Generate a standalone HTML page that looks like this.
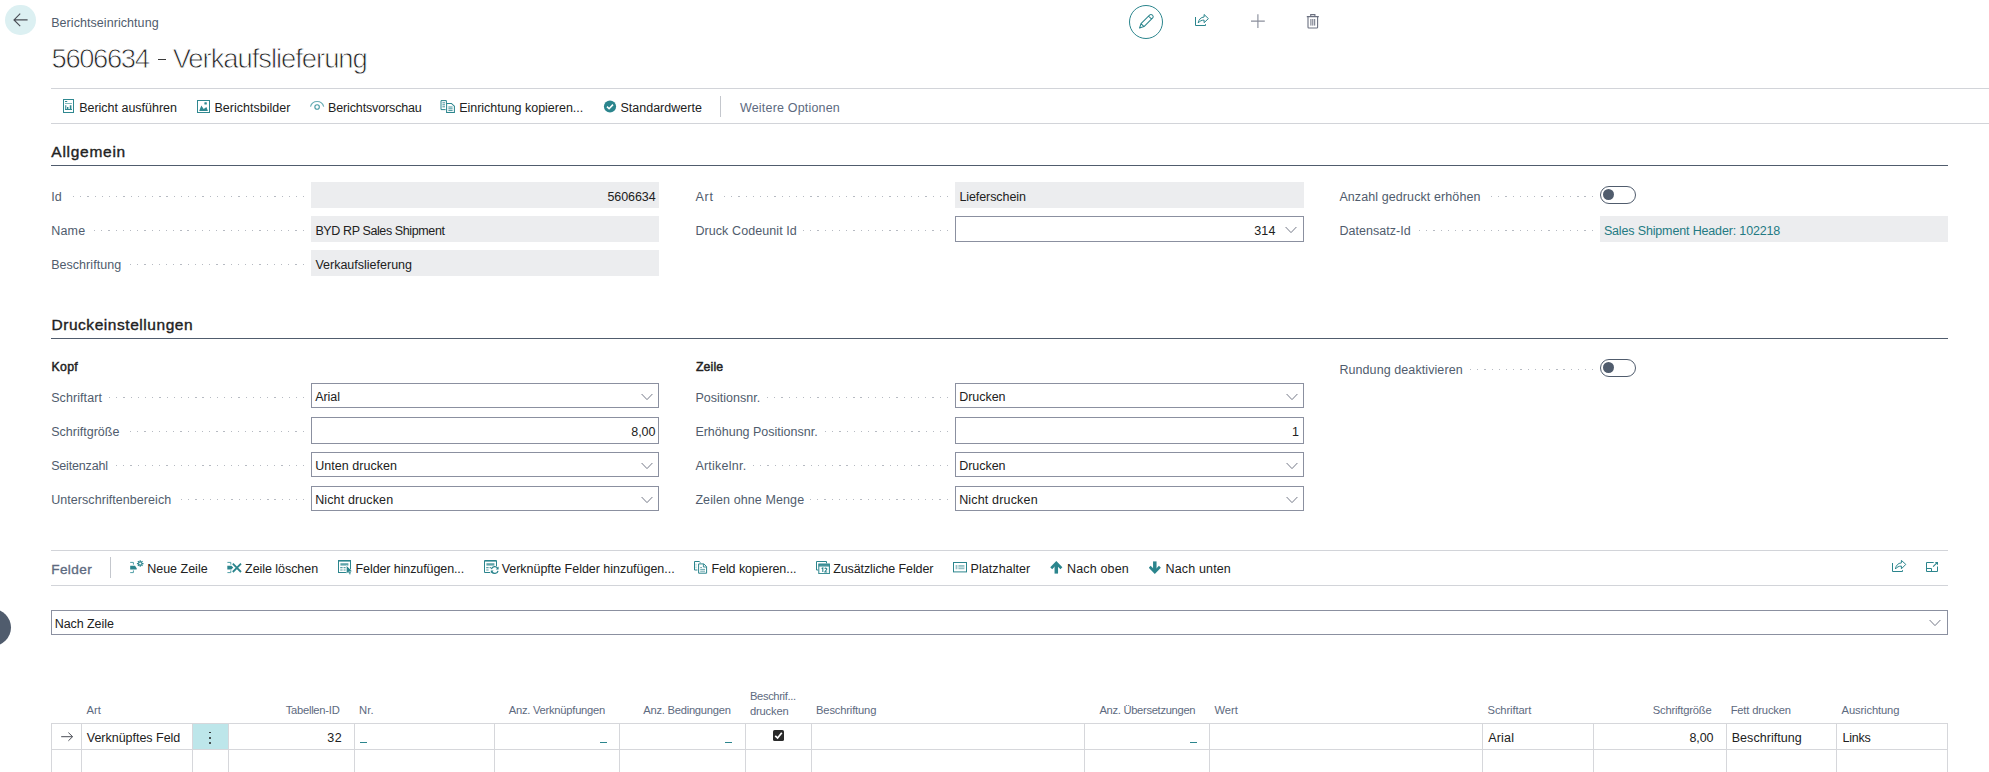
<!DOCTYPE html>
<html lang="de"><head><meta charset="utf-8"><title>Berichtseinrichtung</title>
<style>
html,body{margin:0;padding:0;background:#fff;}
body{width:1989px;height:772px;position:relative;overflow:hidden;font-family:"Liberation Sans", sans-serif;}
.a{position:absolute;}
.t{position:absolute;white-space:pre;line-height:20px;height:20px;}
</style></head><body>
<div class="a" style="left:5px;top:5px;width:31px;height:30.4px;background:#dcf0f2;border-radius:16px;"></div>
<svg class="a" style="left:12px;top:12px" width="17" height="16" viewBox="0 0 17 16" fill="none"><path d="M15.6 7.9 H2.2 M8.2 1.6 L2 7.9 L8.2 14.2" stroke="#4a4d55" stroke-width="1.15" fill="none"/></svg>
<div class="a" style="left:158.3px;top:58.9px;width:7.3px;height:1.4px;background:#3a3a3a;"></div>
<div class="a" style="left:1129px;top:5px;width:34px;height:34px;border:1.2px solid #2b858d;border-radius:50%;box-sizing:border-box"></div>
<svg class="a" style="left:1138px;top:13px" width="17" height="17" viewBox="0 0 17 17" fill="none"><path d="M1.6 15 L3 10.6 L11.8 1.9 a1.6 1.6 0 0 1 2.3 0 l0.6 0.6 a1.6 1.6 0 0 1 0 2.3 L6 13.6 Z M3 10.6 L6 13.6 M10.6 3.1 L13.5 6" stroke="#2b858d" stroke-width="1.05" fill="none" stroke-linejoin="round"/></svg>
<svg class="a" style="left:1194px;top:14px" width="16" height="13" viewBox="0 0 16 13" fill="none"><path d="M1.5 3 V11.5 H11.5 V10.2" stroke="#2b858d" stroke-width="1" fill="none"/><path d="M4.2 9 C4.8 5.4 6.8 3.2 10.1 3 V0.5 L14.4 4.6 L10.1 8.7 V6.1 C7.6 6.1 5.8 7 4.2 9 Z" stroke="#2b858d" stroke-width="1" fill="none" stroke-linejoin="round"/></svg>
<svg class="a" style="left:1250px;top:14px" width="15" height="15" viewBox="0 0 15 15" fill="none"><path d="M7.9 0.2 V14 M1 7.1 H14.8" stroke="#8b8f9c" stroke-width="1.15"/></svg>
<svg class="a" style="left:1306px;top:13px" width="14" height="16" viewBox="0 0 14 16" fill="none"><path d="M0.8 3.6 H12.8 M4.7 3.4 V1.6 H8.9 V3.4 M2 3.8 V14.2 a0.8 0.8 0 0 0 0.8 0.8 H10.8 a0.8 0.8 0 0 0 0.8 -0.8 V3.8" stroke="#6b7080" stroke-width="1.1" fill="none"/><path d="M4.9 6 V12.6 M6.8 6 V12.6 M8.7 6 V12.6" stroke="#6b7080" stroke-width="1"/></svg>
<div class="a" style="left:51px;top:88px;width:1938px;height:1px;background:#d2d4d9;"></div>
<div class="a" style="left:51px;top:123px;width:1938px;height:1px;background:#d2d4d9;"></div>
<svg class="a" style="left:63px;top:99px" width="11" height="14" viewBox="0 0 11 14" fill="none"><rect x="0.5" y="0.5" width="10" height="13" stroke="#2f8890" stroke-width="1"/><path d="M2 2.5 H4.2" stroke="#2f8890" stroke-width="1"/><path d="M2 4.5 H9" stroke="#2f8890" stroke-width="1" opacity="0.6"/><path d="M2.2 10.5 V6.3 H3.3 V10.5 Z M4 10.5 V8 H5.4 V10.5 Z M6.8 10.5 V6.3 H8.4 V10.5 Z" fill="#2f8890"/><path d="M2 10.5 H9" stroke="#2f8890" stroke-width="1"/></svg>
<svg class="a" style="left:197px;top:100px" width="13" height="13" viewBox="0 0 13 13" fill="none"><rect x="0.5" y="0.5" width="12" height="12" stroke="#2f8890" stroke-width="1"/><path d="M2.2 10.9 L4.3 5.6 L6.7 8.9 L9.4 7.1 L10.9 10.9 Z" fill="#2f8890"/><rect x="7.4" y="2.3" width="2.4" height="2.1" rx="0.5" fill="#2f8890"/></svg>
<svg class="a" style="left:309px;top:100px" width="16" height="12" viewBox="0 0 16 12" fill="none"><path d="M1.5 6.6 C2.4 3.2 4.8 1.5 8.1 1.5 C11.4 1.5 13.8 3.2 14.7 6.6" stroke="#68adb4" stroke-width="1.15" fill="none"/><circle cx="8.1" cy="7" r="2.25" stroke="#4a9ca4" stroke-width="1.15" fill="none"/></svg>
<svg class="a" style="left:440px;top:100px" width="16" height="13" viewBox="0 0 16 13" fill="none"><path d="M1 0.6 H6.4 V3.6 M1 0.6 V9.6 H5.6" stroke="#2b858d" stroke-width="1" fill="none"/><path d="M2.4 2.8 H5 M2.4 4.8 H5 M2.4 6.8 H5" stroke="#2b858d" stroke-width="0.9"/><path d="M6.6 3.4 H11.4 L14.4 6.2 V12.4 H6.6 Z" stroke="#2b858d" stroke-width="1.05" fill="none"/><path d="M8.4 7 H12.6 M8.4 8.8 H12.6 M8.4 10.6 H12.6" stroke="#2b858d" stroke-width="0.9"/></svg>
<svg class="a" style="left:603px;top:100px" width="14" height="13" viewBox="0 0 14 13" fill="none"><circle cx="7" cy="6.5" r="6.1" fill="#2b858d"/><path d="M4 6.6 L6.1 8.7 L10 4.6" stroke="#fff" stroke-width="1.6" fill="none"/></svg>
<div class="a" style="left:720px;top:96px;width:1px;height:21px;background:#c4c7cd;"></div>
<div class="a" style="left:51px;top:165px;width:1897px;height:1px;background:#505c6d;"></div>
<div class="a" style="left:72.72px;top:195.80px;width:231.28px;height:1.5px;background:repeating-linear-gradient(to right,#b6bac2 0,#b6bac2 1.25px,transparent 1.25px,transparent 7.19px)"></div>
<div class="a" style="left:311px;top:182px;width:348px;height:26px;background:#ecedef;"></div>
<div class="a" style="left:94.29px;top:229.80px;width:209.71px;height:1.5px;background:repeating-linear-gradient(to right,#b6bac2 0,#b6bac2 1.25px,transparent 1.25px,transparent 7.19px)"></div>
<div class="a" style="left:311px;top:216px;width:348px;height:26px;background:#ecedef;"></div>
<div class="a" style="left:130.24px;top:263.80px;width:173.76px;height:1.5px;background:repeating-linear-gradient(to right,#b6bac2 0,#b6bac2 1.25px,transparent 1.25px,transparent 7.19px)"></div>
<div class="a" style="left:311px;top:250px;width:348px;height:26px;background:#ecedef;"></div>
<div class="a" style="left:723.91px;top:195.80px;width:224.09px;height:1.5px;background:repeating-linear-gradient(to right,#b6bac2 0,#b6bac2 1.25px,transparent 1.25px,transparent 7.19px)"></div>
<div class="a" style="left:955px;top:182px;width:349px;height:26px;background:#ecedef;"></div>
<div class="a" style="left:803.00px;top:229.80px;width:145.00px;height:1.5px;background:repeating-linear-gradient(to right,#b6bac2 0,#b6bac2 1.25px,transparent 1.25px,transparent 7.19px)"></div>
<div class="a" style="left:955px;top:216px;width:349px;height:26px;background:#fff;border:1px solid #8b90a0;box-sizing:border-box;"></div>
<svg class="a" style="left:1285.3px;top:226px" width="12" height="8" viewBox="0 0 12 8" fill="none"><path d="M0.6 1 L6 6.6 L11.4 1" stroke="#747988" stroke-width="1" fill="none"/></svg>
<div class="a" style="left:1491.14px;top:195.80px;width:101.86px;height:1.5px;background:repeating-linear-gradient(to right,#b6bac2 0,#b6bac2 1.25px,transparent 1.25px,transparent 7.19px)"></div>
<div class="a" style="left:1600px;top:186px;width:36px;height:18px;background:#fff;border:1px solid #505c6d;box-sizing:border-box;border-radius:9px;"></div>
<div class="a" style="left:1602.6px;top:189.0px;width:11px;height:11px;background:#505c6d;border-radius:6px;"></div>
<div class="a" style="left:1419.24px;top:229.80px;width:173.76px;height:1.5px;background:repeating-linear-gradient(to right,#b6bac2 0,#b6bac2 1.25px,transparent 1.25px,transparent 7.19px)"></div>
<div class="a" style="left:1600px;top:216px;width:348px;height:26px;background:#ecedef;"></div>
<div class="a" style="left:51px;top:338px;width:1897px;height:1px;background:#505c6d;"></div>
<div class="a" style="left:108.67px;top:396.80px;width:195.33px;height:1.5px;background:repeating-linear-gradient(to right,#b6bac2 0,#b6bac2 1.25px,transparent 1.25px,transparent 7.19px)"></div>
<div class="a" style="left:311px;top:383px;width:348px;height:25px;background:#fff;border:1px solid #8b90a0;box-sizing:border-box;"></div>
<svg class="a" style="left:640.5px;top:392.5px" width="12" height="8" viewBox="0 0 12 8" fill="none"><path d="M0.6 1 L6 6.6 L11.4 1" stroke="#747988" stroke-width="1" fill="none"/></svg>
<div class="a" style="left:130.24px;top:430.80px;width:173.76px;height:1.5px;background:repeating-linear-gradient(to right,#b6bac2 0,#b6bac2 1.25px,transparent 1.25px,transparent 7.19px)"></div>
<div class="a" style="left:311px;top:417px;width:348px;height:27px;background:#fff;border:1px solid #8b90a0;box-sizing:border-box;"></div>
<div class="a" style="left:115.86px;top:464.80px;width:188.14px;height:1.5px;background:repeating-linear-gradient(to right,#b6bac2 0,#b6bac2 1.25px,transparent 1.25px,transparent 7.19px)"></div>
<div class="a" style="left:311px;top:452px;width:348px;height:25px;background:#fff;border:1px solid #8b90a0;box-sizing:border-box;"></div>
<svg class="a" style="left:640.5px;top:461.5px" width="12" height="8" viewBox="0 0 12 8" fill="none"><path d="M0.6 1 L6 6.6 L11.4 1" stroke="#747988" stroke-width="1" fill="none"/></svg>
<div class="a" style="left:180.57px;top:498.80px;width:123.43px;height:1.5px;background:repeating-linear-gradient(to right,#b6bac2 0,#b6bac2 1.25px,transparent 1.25px,transparent 7.19px)"></div>
<div class="a" style="left:311px;top:486px;width:348px;height:25px;background:#fff;border:1px solid #8b90a0;box-sizing:border-box;"></div>
<svg class="a" style="left:640.5px;top:495.5px" width="12" height="8" viewBox="0 0 12 8" fill="none"><path d="M0.6 1 L6 6.6 L11.4 1" stroke="#747988" stroke-width="1" fill="none"/></svg>
<div class="a" style="left:767.05px;top:396.80px;width:180.95px;height:1.5px;background:repeating-linear-gradient(to right,#b6bac2 0,#b6bac2 1.25px,transparent 1.25px,transparent 7.19px)"></div>
<div class="a" style="left:955px;top:383px;width:349px;height:25px;background:#fff;border:1px solid #8b90a0;box-sizing:border-box;"></div>
<svg class="a" style="left:1285.5px;top:392.5px" width="12" height="8" viewBox="0 0 12 8" fill="none"><path d="M0.6 1 L6 6.6 L11.4 1" stroke="#747988" stroke-width="1" fill="none"/></svg>
<div class="a" style="left:824.57px;top:430.80px;width:123.43px;height:1.5px;background:repeating-linear-gradient(to right,#b6bac2 0,#b6bac2 1.25px,transparent 1.25px,transparent 7.19px)"></div>
<div class="a" style="left:955px;top:417px;width:349px;height:27px;background:#fff;border:1px solid #8b90a0;box-sizing:border-box;"></div>
<div class="a" style="left:752.67px;top:464.80px;width:195.33px;height:1.5px;background:repeating-linear-gradient(to right,#b6bac2 0,#b6bac2 1.25px,transparent 1.25px,transparent 7.19px)"></div>
<div class="a" style="left:955px;top:452px;width:349px;height:25px;background:#fff;border:1px solid #8b90a0;box-sizing:border-box;"></div>
<svg class="a" style="left:1285.5px;top:461.5px" width="12" height="8" viewBox="0 0 12 8" fill="none"><path d="M0.6 1 L6 6.6 L11.4 1" stroke="#747988" stroke-width="1" fill="none"/></svg>
<div class="a" style="left:810.19px;top:498.80px;width:137.81px;height:1.5px;background:repeating-linear-gradient(to right,#b6bac2 0,#b6bac2 1.25px,transparent 1.25px,transparent 7.19px)"></div>
<div class="a" style="left:955px;top:486px;width:349px;height:25px;background:#fff;border:1px solid #8b90a0;box-sizing:border-box;"></div>
<svg class="a" style="left:1285.5px;top:495.5px" width="12" height="8" viewBox="0 0 12 8" fill="none"><path d="M0.6 1 L6 6.6 L11.4 1" stroke="#747988" stroke-width="1" fill="none"/></svg>
<div class="a" style="left:1469.57px;top:368.80px;width:123.43px;height:1.5px;background:repeating-linear-gradient(to right,#b6bac2 0,#b6bac2 1.25px,transparent 1.25px,transparent 7.19px)"></div>
<div class="a" style="left:1600px;top:359px;width:36px;height:18px;background:#fff;border:1px solid #505c6d;box-sizing:border-box;border-radius:9px;"></div>
<div class="a" style="left:1602.6px;top:362.0px;width:11px;height:11px;background:#505c6d;border-radius:6px;"></div>
<div class="a" style="left:51px;top:550px;width:1897px;height:1px;background:#d2d4d9;"></div>
<div class="a" style="left:51px;top:585px;width:1897px;height:1px;background:#d2d4d9;"></div>
<div class="a" style="left:110px;top:557px;width:1px;height:21px;background:#c4c7cd;"></div>
<svg class="a" style="left:129px;top:560px" width="15" height="14" viewBox="0 0 15 14" fill="none"><path d="M1.2 2.4 H4.4 V4.6 M1.2 12.6 H4.4 V10.4" stroke="#4f9ea6" stroke-width="1" fill="none"/><path d="M1.2 5.8 H6 L7.8 8.4 L7.6 9.4 H1.2 Z" fill="#2b858d"/><path d="M11.2 0.2 V6.8 M7.9 3.5 H14.5 M8.9 1.2 L13.5 5.8 M13.5 1.2 L8.9 5.8" stroke="#2b858d" stroke-width="1.25"/><circle cx="11.2" cy="3.5" r="1.5" fill="#fff" stroke="#2b858d" stroke-width="0.9"/></svg>
<svg class="a" style="left:227px;top:560px" width="15" height="14" viewBox="0 0 15 14" fill="none"><path d="M0.4 2.4 H3.8 V4.6 M0.4 12.6 H3.8 V10.4" stroke="#4f9ea6" stroke-width="1" fill="none"/><path d="M0.3 5.8 H4.4 L6.2 7.6 L4.4 9.4 H0.3 Z" fill="#2b858d"/><path d="M5.8 3.6 L14 12 M14 3.6 L5.8 12" stroke="#2b858d" stroke-width="1.8"/></svg>
<svg class="a" style="left:338px;top:560px" width="15" height="15" viewBox="0 0 15 15" fill="none"><rect x="0.5" y="0.5" width="12" height="12" stroke="#2b858d" stroke-width="1" fill="none"/><path d="M0.5 1.5 H12.5" stroke="#2b858d" stroke-width="1" opacity="0.6"/><path d="M2.4 3.2 H10.4 V5.6 H2.4 Z" fill="#2b858d" opacity="0.75"/><path d="M2.2 7.6 H4.6 M5.6 7.6 H7.6 M2.2 10 H4.6 M5.6 10 H7.6" stroke="#2b858d" stroke-width="1.1" opacity="0.8"/><path d="M8.4 5.4 V13.6 L10.3 11.9 L11.6 14.7 L13 14 L11.7 11.4 L14.2 11.2 Z" fill="#2b858d" stroke="#fff" stroke-width="0.5"/></svg>
<svg class="a" style="left:484px;top:560px" width="15" height="15" viewBox="0 0 15 15" fill="none"><path d="M0.5 12.5 V0.5 H12.5 V6" stroke="#2b858d" stroke-width="1" fill="none"/><path d="M0.5 12.5 H6" stroke="#2b858d" stroke-width="1"/><path d="M0.5 1.5 H12.5" stroke="#2b858d" stroke-width="1" opacity="0.6"/><path d="M2.4 3.2 H10.4 V5.6 H2.4 Z" fill="#2b858d" opacity="0.75"/><path d="M2.2 7.6 H4.6 M5.6 7.6 H7 M2.2 10 H4.6" stroke="#2b858d" stroke-width="1.1" opacity="0.8"/><path d="M7.4 9.2 A3.3 3.3 0 0 1 13.6 8.4 M14 10.8 A3.3 3.3 0 0 1 7.8 11.6" stroke="#2b858d" stroke-width="1.3" fill="none"/><path d="M14.6 6.4 V9.4 H11.8 Z M6.8 13.6 V10.6 H9.6 Z" fill="#2b858d"/></svg>
<svg class="a" style="left:694px;top:561px" width="14" height="13" viewBox="0 0 14 13" fill="none"><path d="M0.5 0.5 H5.2 L6.6 1.8 M0.5 0.5 V9 H3.4" stroke="#2b858d" stroke-width="1" fill="none"/><path d="M2 2.8 V3.6 M2 4.6 V5.4 M2 6.4 V7.2" stroke="#2b858d" stroke-width="1" opacity="0.7"/><path d="M4.6 2.9 H9.8 L12.6 5.6 V12.2 H4.6 Z" stroke="#2b858d" stroke-width="1" fill="none"/><path d="M9.4 3 V6 H12.4" stroke="#2b858d" stroke-width="0.9" fill="none"/><path d="M6.2 6.6 H8 M6.2 8.4 H11 M6.2 10.2 H11" stroke="#2b858d" stroke-width="0.9" opacity="0.8"/></svg>
<svg class="a" style="left:816px;top:561px" width="14" height="13" viewBox="0 0 14 13" fill="none"><path d="M2.2 9 H0.5 V0.5 H10.5 V2.4" stroke="#2b858d" stroke-width="1" fill="none"/><rect x="2.8" y="3" width="10.6" height="9.6" stroke="#2b858d" stroke-width="1" fill="none"/><path d="M2.8 3 H13.4 V5.6 H2.8 Z" fill="#2b858d" opacity="0.85"/><path d="M5.6 7.6 L6.8 7 V11 M8.8 7.8 C9.2 6.8 11 7 10.8 8.2 C10.6 9.4 9 9.8 8.8 11 H11.2" stroke="#2b858d" stroke-width="1.1" fill="none"/></svg>
<svg class="a" style="left:953px;top:562px" width="14" height="11" viewBox="0 0 14 11" fill="none"><rect x="0.5" y="0.5" width="13" height="9.4" stroke="#2b858d" stroke-width="1" fill="none"/><path d="M2.6 3.1 H4.4 V7.3 H2.6 Z M5.4 3.1 H11.4 V7.3 H5.4 Z" fill="#2b858d" opacity="0.5"/><path d="M5.4 5.2 H11.4" stroke="#fff" stroke-width="0.6"/></svg>
<svg class="a" style="left:1050px;top:561px" width="13" height="13" viewBox="0 0 13 13" fill="none"><path d="M6.3 12.6 V3.4" stroke="#2b858d" stroke-width="3.5"/><path d="M1.2 7.2 L6.3 2 L11.4 7.2" stroke="#2b858d" stroke-width="2.7" fill="none"/></svg>
<svg class="a" style="left:1149px;top:561px" width="13" height="13" viewBox="0 0 13 13" fill="none"><path d="M5.8 0.4 V9.6" stroke="#2b858d" stroke-width="3.5"/><path d="M0.7 5.8 L5.8 11 L10.9 5.8" stroke="#2b858d" stroke-width="2.7" fill="none"/></svg>
<svg class="a" style="left:1891px;top:560px" width="16" height="13" viewBox="0 0 16 13" fill="none"><path d="M1.5 3 V11.5 H11.5 V10.2" stroke="#2b858d" stroke-width="1" fill="none"/><path d="M4.4 9 C5 5.4 7 3.1 10.4 2.9 V0.4 L14.8 4.4 L10.4 8.8 V6.1 C7.8 6.1 6 7 4.4 9 Z" stroke="#2b858d" stroke-width="1" fill="none" stroke-linejoin="round"/></svg>
<svg class="a" style="left:1925px;top:561px" width="14" height="12" viewBox="0 0 14 12" fill="none"><path d="M8.7 1.5 H1.5 V10.5 H12.5 V5.5 M1.5 7.5 H6.5 V10.5" stroke="#2b858d" stroke-width="1" fill="none"/><path d="M8.1 5.6 L12.2 1.7" stroke="#2b858d" stroke-width="1.1"/><path d="M9.8 1 H13 V4.2 Z" fill="#2b858d"/></svg>
<div class="a" style="left:51px;top:610px;width:1897px;height:25px;background:#fff;border:1px solid #8b90a0;box-sizing:border-box;"></div>
<svg class="a" style="left:1929.3px;top:619px" width="12" height="8" viewBox="0 0 12 8" fill="none"><path d="M0.6 1 L6 6.6 L11.4 1" stroke="#747988" stroke-width="1" fill="none"/></svg>
<div class="a" style="left:-26px;top:608.8px;width:37px;height:37.6px;background:#505c6d;border-radius:19px;"></div>
<div class="a" style="left:192.5px;top:723px;width:36px;height:27px;background:#bde6ea;"></div>
<div class="a" style="left:51px;top:723px;width:1897px;height:1px;background:#d6d7db;"></div>
<div class="a" style="left:51px;top:749px;width:1897px;height:1px;background:#d6d7db;"></div>
<div class="a" style="left:51px;top:723px;width:1px;height:49px;background:#d6d7db;"></div>
<div class="a" style="left:81px;top:723px;width:1px;height:49px;background:#d6d7db;"></div>
<div class="a" style="left:192px;top:723px;width:1px;height:49px;background:#d6d7db;"></div>
<div class="a" style="left:228px;top:723px;width:1px;height:49px;background:#d6d7db;"></div>
<div class="a" style="left:354px;top:723px;width:1px;height:49px;background:#d6d7db;"></div>
<div class="a" style="left:494px;top:723px;width:1px;height:49px;background:#d6d7db;"></div>
<div class="a" style="left:619px;top:723px;width:1px;height:49px;background:#d6d7db;"></div>
<div class="a" style="left:745px;top:723px;width:1px;height:49px;background:#d6d7db;"></div>
<div class="a" style="left:811px;top:723px;width:1px;height:49px;background:#d6d7db;"></div>
<div class="a" style="left:1084px;top:723px;width:1px;height:49px;background:#d6d7db;"></div>
<div class="a" style="left:1209px;top:723px;width:1px;height:49px;background:#d6d7db;"></div>
<div class="a" style="left:1482px;top:723px;width:1px;height:49px;background:#d6d7db;"></div>
<div class="a" style="left:1593px;top:723px;width:1px;height:49px;background:#d6d7db;"></div>
<div class="a" style="left:1726px;top:723px;width:1px;height:49px;background:#d6d7db;"></div>
<div class="a" style="left:1836px;top:723px;width:1px;height:49px;background:#d6d7db;"></div>
<div class="a" style="left:1947px;top:723px;width:1px;height:49px;background:#d6d7db;"></div>
<svg class="a" style="left:61px;top:732px" width="13" height="10" viewBox="0 0 13 10" fill="none"><path d="M0.2 4.7 H11.4 M7.4 0.6 L11.6 4.7 L7.4 8.8" stroke="#4a4d55" stroke-width="1" fill="none"/></svg>
<div class="a" style="left:209.3px;top:731.6px;width:1.7px;height:1.7px;background:#212121;border-radius:1px;"></div>
<div class="a" style="left:209.3px;top:737.1px;width:1.7px;height:1.7px;background:#212121;border-radius:1px;"></div>
<div class="a" style="left:209.3px;top:742.4000000000001px;width:1.7px;height:1.7px;background:#212121;border-radius:1px;"></div>
<div class="a" style="left:360px;top:742.4px;width:7px;height:1.1px;background:#2b858d;"></div>
<div class="a" style="left:600.1px;top:742.4px;width:6.899999999999977px;height:1.1px;background:#2b858d;"></div>
<div class="a" style="left:725.1px;top:742.4px;width:7.100000000000023px;height:1.1px;background:#2b858d;"></div>
<div class="a" style="left:1190.4px;top:742.4px;width:6.599999999999909px;height:1.1px;background:#2b858d;"></div>
<div class="a" style="left:773px;top:730.2px;width:11px;height:11px;background:#2a2a2a;border-radius:1.6px;"></div>
<svg class="a" style="left:773px;top:730.2px" width="11" height="11" viewBox="0 0 11 11" fill="none"><path d="M2.2 5.8 L4.6 8 L8.8 2.8" stroke="#fff" stroke-width="1.7" fill="none"/></svg>
<span class="t" style="left:51.17px;top:13.00px;font-size:12.5px;color:#505c6d;letter-spacing:0.063px;">Berichtseinrichtung</span>
<span class="t" style="left:51.53px;top:49.00px;font-size:27.4px;color:#222;letter-spacing:-1.367px;-webkit-text-stroke:0.8px #fff;">5606634</span>
<span class="t" style="left:172.63px;top:49.00px;font-size:27.4px;color:#222;letter-spacing:-1.032px;-webkit-text-stroke:0.8px #fff;">Verkaufslieferung</span>
<span class="t" style="left:79.17px;top:98.00px;font-size:12.5px;color:#212121;letter-spacing:-0.008px;">Bericht ausführen</span>
<span class="t" style="left:214.38px;top:98.00px;font-size:12.5px;color:#212121;letter-spacing:0.024px;">Berichtsbilder</span>
<span class="t" style="left:328.07px;top:98.00px;font-size:12.5px;color:#212121;letter-spacing:-0.142px;">Berichtsvorschau</span>
<span class="t" style="left:459.18px;top:98.00px;font-size:12.5px;color:#212121;letter-spacing:-0.015px;">Einrichtung kopieren...</span>
<span class="t" style="left:620.38px;top:98.00px;font-size:12.5px;color:#212121;letter-spacing:0.020px;">Standardwerte</span>
<span class="t" style="left:739.98px;top:98.00px;font-size:12.5px;color:#5d6a80;letter-spacing:0.187px;">Weitere Optionen</span>
<span class="t" style="left:51.33px;top:142.00px;font-size:15.5px;color:#222;letter-spacing:0.723px;-webkit-text-stroke:0.38px #222;">Allgemein</span>
<span class="t" style="left:51.17px;top:187.00px;font-size:12.5px;color:#505c6d;letter-spacing:0.013px;">Id</span>
<span class="t" style="left:607.38px;top:187.00px;font-size:12.5px;color:#212121;letter-spacing:-0.070px;">5606634</span>
<span class="t" style="left:51.17px;top:221.00px;font-size:12.5px;color:#505c6d;letter-spacing:0.202px;">Name</span>
<span class="t" style="left:315.38px;top:221.00px;font-size:12.5px;color:#212121;letter-spacing:-0.390px;">BYD RP Sales Shipment</span>
<span class="t" style="left:51.17px;top:255.00px;font-size:12.5px;color:#505c6d;letter-spacing:0.042px;">Beschriftung</span>
<span class="t" style="left:315.38px;top:255.00px;font-size:12.5px;color:#212121;letter-spacing:0.004px;">Verkaufslieferung</span>
<span class="t" style="left:695.38px;top:187.00px;font-size:12.5px;color:#505c6d;letter-spacing:0.783px;">Art</span>
<span class="t" style="left:959.38px;top:187.00px;font-size:12.5px;color:#212121;letter-spacing:-0.078px;">Lieferschein</span>
<span class="t" style="left:695.38px;top:221.00px;font-size:12.5px;color:#505c6d;letter-spacing:0.087px;">Druck Codeunit Id</span>
<span class="t" style="left:1254.17px;top:221.00px;font-size:12.5px;color:#212121;letter-spacing:0.245px;">314</span>
<span class="t" style="left:1339.38px;top:187.00px;font-size:12.5px;color:#505c6d;letter-spacing:0.094px;">Anzahl gedruckt erhöhen</span>
<span class="t" style="left:1339.38px;top:221.00px;font-size:12.5px;color:#505c6d;letter-spacing:0.043px;">Datensatz-Id</span>
<span class="t" style="left:1603.88px;top:221.00px;font-size:12.5px;color:#237a83;letter-spacing:-0.151px;">Sales Shipment Header: 102218</span>
<span class="t" style="left:51.43px;top:315.00px;font-size:15.5px;color:#222;letter-spacing:0.554px;-webkit-text-stroke:0.38px #222;">Druckeinstellungen</span>
<span class="t" style="left:51.59px;top:357.00px;font-size:12.3px;color:#222;letter-spacing:0.278px;-webkit-text-stroke:0.45px #222;">Kopf</span>
<span class="t" style="left:695.88px;top:357.00px;font-size:12.3px;color:#222;letter-spacing:0.143px;-webkit-text-stroke:0.45px #222;">Zeile</span>
<span class="t" style="left:51.17px;top:388.00px;font-size:12.5px;color:#505c6d;letter-spacing:0.082px;">Schriftart</span>
<span class="t" style="left:315.18px;top:387.00px;font-size:12.5px;color:#212121;letter-spacing:-0.066px;">Arial</span>
<span class="t" style="left:51.17px;top:422.00px;font-size:12.5px;color:#505c6d;letter-spacing:0.014px;">Schriftgröße</span>
<span class="t" style="left:631.27px;top:422.00px;font-size:12.5px;color:#212121;letter-spacing:-0.065px;">8,00</span>
<span class="t" style="left:51.17px;top:456.00px;font-size:12.5px;color:#505c6d;letter-spacing:-0.169px;">Seitenzahl</span>
<span class="t" style="left:315.18px;top:456.00px;font-size:12.5px;color:#212121;letter-spacing:0.045px;">Unten drucken</span>
<span class="t" style="left:51.17px;top:490.00px;font-size:12.5px;color:#505c6d;letter-spacing:0.062px;">Unterschriftenbereich</span>
<span class="t" style="left:315.18px;top:490.00px;font-size:12.5px;color:#212121;letter-spacing:0.126px;">Nicht drucken</span>
<span class="t" style="left:695.38px;top:388.00px;font-size:12.5px;color:#505c6d;letter-spacing:0.011px;">Positionsnr.</span>
<span class="t" style="left:959.17px;top:387.00px;font-size:12.5px;color:#212121;letter-spacing:-0.033px;">Drucken</span>
<span class="t" style="left:695.38px;top:422.00px;font-size:12.5px;color:#505c6d;letter-spacing:-0.003px;">Erhöhung Positionsnr.</span>
<span class="t" style="left:1291.88px;top:422.00px;font-size:12.5px;color:#212121;letter-spacing:0.000px;">1</span>
<span class="t" style="left:695.38px;top:456.00px;font-size:12.5px;color:#505c6d;letter-spacing:0.234px;">Artikelnr.</span>
<span class="t" style="left:959.17px;top:456.00px;font-size:12.5px;color:#212121;letter-spacing:-0.033px;">Drucken</span>
<span class="t" style="left:695.38px;top:490.00px;font-size:12.5px;color:#505c6d;letter-spacing:0.107px;">Zeilen ohne Menge</span>
<span class="t" style="left:959.17px;top:490.00px;font-size:12.5px;color:#212121;letter-spacing:0.168px;">Nicht drucken</span>
<span class="t" style="left:1339.38px;top:360.00px;font-size:12.5px;color:#505c6d;letter-spacing:0.086px;">Rundung deaktivieren</span>
<span class="t" style="left:51.22px;top:560.00px;font-size:13.6px;color:#5d6a80;letter-spacing:0.386px;-webkit-text-stroke:0.32px #5d6a80;">Felder</span>
<span class="t" style="left:147.18px;top:559.00px;font-size:12.5px;color:#212121;letter-spacing:-0.000px;">Neue Zeile</span>
<span class="t" style="left:245.07px;top:559.00px;font-size:12.5px;color:#212121;letter-spacing:-0.051px;">Zeile löschen</span>
<span class="t" style="left:355.57px;top:559.00px;font-size:12.5px;color:#212121;letter-spacing:-0.097px;">Felder hinzufügen...</span>
<span class="t" style="left:501.68px;top:559.00px;font-size:12.5px;color:#212121;letter-spacing:-0.026px;">Verknüpfte Felder hinzufügen...</span>
<span class="t" style="left:711.48px;top:559.00px;font-size:12.5px;color:#212121;letter-spacing:-0.075px;">Feld kopieren...</span>
<span class="t" style="left:833.27px;top:559.00px;font-size:12.5px;color:#212121;letter-spacing:-0.116px;">Zusätzliche Felder</span>
<span class="t" style="left:970.58px;top:559.00px;font-size:12.5px;color:#212121;letter-spacing:0.059px;">Platzhalter</span>
<span class="t" style="left:1066.97px;top:559.00px;font-size:12.5px;color:#212121;letter-spacing:0.160px;">Nach oben</span>
<span class="t" style="left:1165.58px;top:559.00px;font-size:12.5px;color:#212121;letter-spacing:0.146px;">Nach unten</span>
<span class="t" style="left:54.67px;top:614.00px;font-size:12.5px;color:#212121;letter-spacing:-0.056px;">Nach Zeile</span>
<span class="t" style="left:86.54px;top:700.00px;font-size:11.2px;color:#5d6a80;letter-spacing:0.012px;">Art</span>
<span class="t" style="left:285.64px;top:700.00px;font-size:11.2px;color:#5d6a80;letter-spacing:-0.247px;">Tabellen-ID</span>
<span class="t" style="left:359.04px;top:700.00px;font-size:11.2px;color:#5d6a80;letter-spacing:0.112px;">Nr.</span>
<span class="t" style="left:508.74px;top:700.00px;font-size:11.2px;color:#5d6a80;letter-spacing:-0.250px;">Anz. Verknüpfungen</span>
<span class="t" style="left:643.24px;top:700.00px;font-size:11.2px;color:#5d6a80;letter-spacing:-0.249px;">Anz. Bedingungen</span>
<span class="t" style="left:749.94px;top:686.00px;font-size:11.2px;color:#5d6a80;letter-spacing:-0.363px;">Beschrif...</span>
<span class="t" style="left:749.94px;top:701.00px;font-size:11.2px;color:#5d6a80;letter-spacing:-0.182px;">drucken</span>
<span class="t" style="left:816.04px;top:700.00px;font-size:11.2px;color:#5d6a80;letter-spacing:-0.170px;">Beschriftung</span>
<span class="t" style="left:1099.44px;top:700.00px;font-size:11.2px;color:#5d6a80;letter-spacing:-0.309px;">Anz. Übersetzungen</span>
<span class="t" style="left:1214.54px;top:700.00px;font-size:11.2px;color:#5d6a80;letter-spacing:-0.034px;">Wert</span>
<span class="t" style="left:1487.54px;top:700.00px;font-size:11.2px;color:#5d6a80;letter-spacing:-0.116px;">Schriftart</span>
<span class="t" style="left:1652.74px;top:700.00px;font-size:11.2px;color:#5d6a80;letter-spacing:-0.174px;">Schriftgröße</span>
<span class="t" style="left:1730.64px;top:700.00px;font-size:11.2px;color:#5d6a80;letter-spacing:-0.161px;">Fett drucken</span>
<span class="t" style="left:1841.54px;top:700.00px;font-size:11.2px;color:#5d6a80;letter-spacing:-0.117px;">Ausrichtung</span>
<span class="t" style="left:86.78px;top:728.00px;font-size:12.5px;color:#212121;letter-spacing:-0.018px;">Verknüpftes Feld</span>
<span class="t" style="left:327.18px;top:728.00px;font-size:12.5px;color:#212121;letter-spacing:0.544px;">32</span>
<span class="t" style="left:1488.17px;top:728.00px;font-size:12.5px;color:#212121;letter-spacing:0.209px;">Arial</span>
<span class="t" style="left:1689.38px;top:728.00px;font-size:12.5px;color:#212121;letter-spacing:-0.065px;">8,00</span>
<span class="t" style="left:1731.67px;top:728.00px;font-size:12.5px;color:#212121;letter-spacing:0.061px;">Beschriftung</span>
<span class="t" style="left:1842.47px;top:728.00px;font-size:12.5px;color:#212121;letter-spacing:-0.234px;">Links</span>
</body></html>
